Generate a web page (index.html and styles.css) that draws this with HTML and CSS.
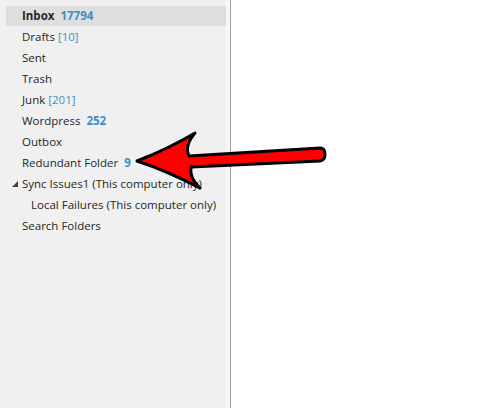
FILE: index.html
```html
<!DOCTYPE html>
<html lang="en">
<head>
    <meta charset="UTF-8">
    <title>Folders</title>
    <link rel="stylesheet" href="styles.css">
</head>
<body>
    <div class="window">
        <nav class="folders">
            <ul class="folder-list">
                <li class="folder selected"><b>Inbox</b> <span class="count unread">17794</span></li>
                <li class="folder">Drafts <span class="count">[10]</span></li>
                <li class="folder">Sent</li>
                <li class="folder">Trash</li>
                <li class="folder">Junk <span class="count">[201]</span></li>
                <li class="folder">Wordpress <span class="count unread">252</span></li>
                <li class="folder">Outbox</li>
                <li class="folder">Redundant Folder <span class="count unread">9</span></li>
                <li class="folder group"><span class="caret"></span>Sync Issues1 (This computer only)</li>
                <li class="folder sub">Local Failures (This computer only)</li>
                <li class="folder">Search Folders</li>
            </ul>
        </nav>
        <main class="content"></main>
    </div>

    <!-- callout arrow pointing at the folder -->
    <svg class="callout" width="485" height="408" viewBox="0 0 485 408">
        <path d="M137,161 Q168,149 195,133 Q184,146 189,156 L320,148 Q325,148 325,154.5 Q325,160 320,161 L191,167 Q189,178 200,188 Q165,170 137,161 Z"
              fill="#ff0000" stroke="#000" stroke-width="3" stroke-linejoin="round"/>
    </svg>
</body>
</html>
```

FILE: styles.css
```css
body {
    margin: 0;
    padding: 0;
    font-family: 'Open Sans', 'Noto Sans', sans-serif;
    font-size: 11.5px;
    color: #262626;
    background: #ffffff;
}

.window {
    display: flex;
    height: 408px;
}

.folders {
    width: 230px;
    flex-shrink: 0;
    background: #f0f0f0;
    border-right: 1px solid #a0a0a0;
    box-shadow: inset -4px 0 0 #f6f6f6;
    padding-top: 6px;
}

.folder-list {
    list-style: none;
    margin: 0;
    padding: 0 4px 0 6px;
}

.folder {
    height: 21px;
    line-height: 21px;
    padding-left: 16px;
    white-space: nowrap;
}

.folder.selected {
    height: 20px;
    line-height: 20px;
    background: #dedede;
}

.folder b {
    font-weight: 700;
}

.count {
    color: #3d8ec6;
}

.count.unread {
    font-weight: 700;
    margin-left: 3px;
}

.folder.group {
    position: relative;
}

.caret {
    position: absolute;
    left: 6px;
    top: 8px;
    width: 0;
    height: 0;
    border-left: 6px solid transparent;
    border-bottom: 6px solid #404040;
}

.folder.sub {
    padding-left: 25px;
}

.content {
    flex: 1;
    background: #ffffff;
}

.callout {
    position: absolute;
    left: 0;
    top: 0;
}
```
